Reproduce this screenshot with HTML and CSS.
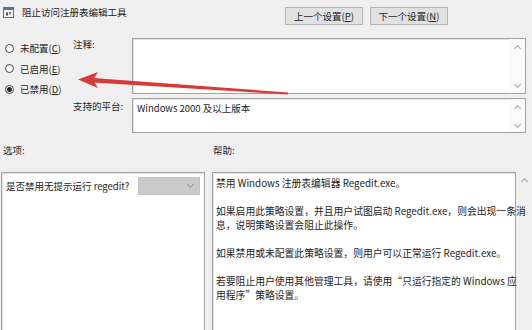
FILE: index.html
```html
<!DOCTYPE html>
<html lang="zh-CN">
<head>
    <meta charset="UTF-8">
    <title>阻止访问注册表编辑工具</title>
    <link rel="stylesheet" href="styles.css">
</head>
<body>
    <div class="window">
        <div class="header">
            <div class="title">
                <svg class="title-icon" width="11" height="11" viewBox="0 0 11 11">
                    <rect x="0.5" y="0.5" width="10" height="10" fill="#f4f4f4" stroke="#6b6b6b"/>
                    <rect x="0.5" y="0.5" width="10" height="2.5" fill="#5d7891"/>
                    <path d="M3 5.5 h2 v3 h-2 z M6 5 l2 0 l-1 3.5 z" fill="#505050"/>
                </svg>
                <span>阻止访问注册表编辑工具</span>
            </div>
            <div class="nav-buttons">
                <button class="btn">上一个设置(<u>P</u>)</button>
                <button class="btn">下一个设置(<u>N</u>)</button>
            </div>
        </div>

        <div class="top">
            <div class="states">
                <label class="radio"><span class="dot"></span><span>未配置(<u>C</u>)</span></label>
                <label class="radio"><span class="dot"></span><span>已启用(<u>E</u>)</span></label>
                <label class="radio"><span class="dot checked"></span><span>已禁用(<u>D</u>)</span></label>
            </div>
            <div class="fields">
                <div class="field-label">注释:</div>
                <div class="box comment">
                    <div class="box-body"></div>
                    <div class="mini-scroll">
                        <span class="chev up"></span>
                        <span class="chev down"></span>
                    </div>
                </div>
                <div class="field-label platform-label">支持的平台:</div>
                <div class="box platform">
                    <div class="box-body">Windows 2000 及以上版本</div>
                    <div class="mini-scroll">
                        <span class="chev up"></span>
                        <span class="chev down"></span>
                    </div>
                </div>
            </div>
        </div>

        <div class="section-labels">
            <div class="section-label options-label">选项:</div>
            <div class="section-label">帮助:</div>
        </div>

        <div class="panels">
            <div class="panel options">
                <div class="option-row">
                    <span>是否禁用无提示运行 regedit?</span>
                    <span class="select"><span class="chev down"></span></span>
                </div>
            </div>
            <div class="panel help">
                <p>禁用 Windows 注册表编辑器 Regedit.exe。</p>
                <p>如果启用此策略设置，并且用户试图启动 Regedit.exe，则会出现一条消<br>息，说明策略设置会阻止此操作。</p>
                <p>如果禁用或未配置此策略设置，则用户可以正常运行 Regedit.exe。</p>
                <p>若要阻止用户使用其他管理工具，请使用“只运行指定的 Windows 应<br>用程序”策略设置。</p>
            </div>
            <div class="help-scroll">
                <span class="chev up"></span>
            </div>
        </div>

        <svg class="arrow" width="532" height="330" viewBox="0 0 532 330">
            <polygon points="93,78 288,92.5 288,94.5 93,82.5" fill="#d83a38"/>
            <polygon points="78,79.5 98,72 93,80 98,88" fill="#d83a38"/>
        </svg>
    </div>
</body>
</html>
```

FILE: styles.css
```css
* {
    margin: 0;
    padding: 0;
    box-sizing: border-box;
}

body {
    width: 532px;
    height: 330px;
    overflow: hidden;
    background: #f0f0f0;
    font-family: "Noto Sans CJK SC", "Noto Sans", sans-serif;
    font-size: 9.5px;
    color: #1e1e1e;
}

.window {
    position: relative;
    height: 330px;
}

u {
    text-decoration: underline;
    text-underline-offset: 1px;
}

/* header */

.header {
    display: flex;
    align-items: flex-start;
    padding-top: 6px;
    height: 38px;
}

.title {
    display: flex;
    align-items: center;
    gap: 8px;
    padding-left: 3px;
    line-height: 12px;
    width: 285px;
}

.nav-buttons {
    display: flex;
    gap: 7px;
    margin-top: 1px;
}

.btn {
    width: 78px;
    height: 18px;
    font: inherit;
    color: #1e1e1e;
    background: #e1e1e1;
    border: 1px solid #b4b4b4;
    line-height: 16px;
}

/* radios + fields */

.top {
    display: flex;
}

.states {
    width: 73px;
    padding-left: 5px;
}

.radio {
    display: flex;
    align-items: center;
    gap: 6px;
    height: 20.5px;
}

.dot {
    width: 9px;
    height: 9px;
    border: 1px solid #444;
    border-radius: 50%;
    background: #fff;
    display: flex;
    align-items: center;
    justify-content: center;
}

.dot.checked::after {
    content: "";
    width: 5px;
    height: 5px;
    border-radius: 50%;
    background: #2b2b2b;
}

.fields {
    display: grid;
    grid-template-columns: 59px 394px;
    row-gap: 4px;
}

.field-label {
    line-height: 12px;
}

.platform-label {
    padding-top: 2px;
}

.box {
    display: flex;
    background: #fff;
    border: 1px solid #a3a3a3;
    box-shadow: inset 1px 1px 0 #e2e2e2;
}

.comment {
    height: 56px;
}

.platform {
    height: 35px;
}

.box-body {
    flex: 1;
    padding: 3px 4px;
    line-height: 12px;
}

.mini-scroll {
    width: 16px;
    display: flex;
    flex-direction: column;
    justify-content: space-between;
    align-items: center;
    padding: 7px 0 6px;
    background: #fbfbfb;
}

.platform .mini-scroll {
    padding: 7px 0 5px;
}

.chev {
    width: 5px;
    height: 5px;
    border-left: 1px solid #a8a8a8;
    border-top: 1px solid #a8a8a8;
}

.chev.up {
    transform: rotate(45deg);
}

.chev.down {
    transform: rotate(225deg);
}

/* lower section */

.section-labels {
    display: flex;
    margin-top: 11px;
    height: 28px;
    line-height: 12px;
}

.options-label {
    width: 213px;
    padding-left: 3px;
}

.panels {
    display: flex;
    height: 170px;
}

.panel {
    background: #fff;
    border: 1px solid #a3a3a3;
    box-shadow: inset 1px 1px 0 #e2e2e2;
}

.options {
    width: 204px;
    margin-left: 1px;
    margin-right: 7px;
}

.option-row {
    display: flex;
    justify-content: space-between;
    align-items: center;
    padding: 3px 4px 0 4px;
    height: 22px;
}

.select {
    width: 62px;
    height: 18px;
    background: #cbcbcb;
    border: 1px solid #c2c2c2;
    display: flex;
    justify-content: flex-end;
    align-items: center;
    padding-right: 6px;
}

.select .chev {
    border-color: #999;
    margin-top: -3px;
}

.help {
    width: 304px;
    padding: 3px 0 0 3px;
    font-size: 9.8px;
    line-height: 14px;
    white-space: nowrap;
}

.help p {
    margin-bottom: 14px;
}

.help-scroll {
    width: 16px;
    display: flex;
    justify-content: center;
    padding-top: 7px;
}

/* red annotation arrow */

.arrow {
    position: absolute;
    left: 0;
    top: 0;
    pointer-events: none;
}
```
